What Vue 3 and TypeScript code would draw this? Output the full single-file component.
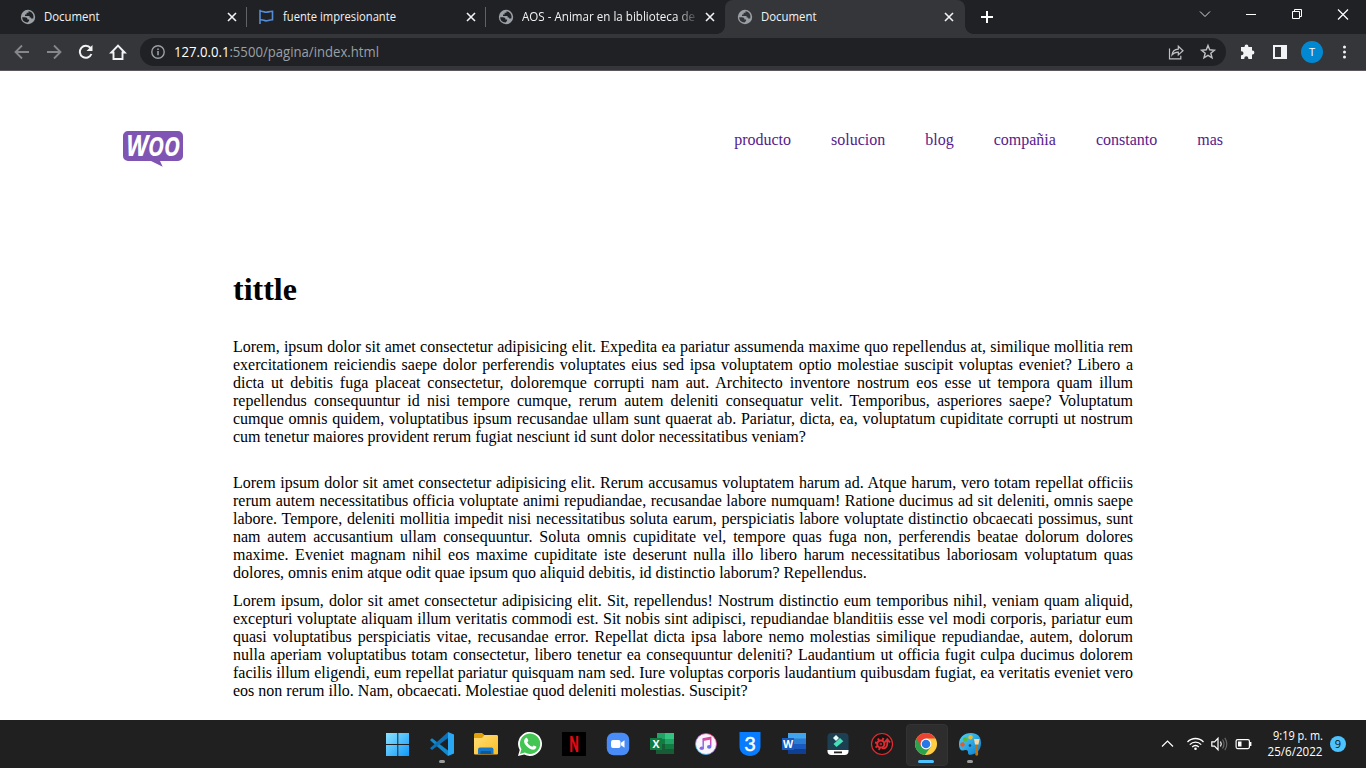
<script setup lang="ts">
interface Tab { title: string; icon: 'globe' | 'flag'; active?: boolean; w: number }

const tabs: Tab[] = [
  { title: 'Document', icon: 'globe', w: 55.5 },
  { title: 'fuente impresionante', icon: 'flag', w: 113 },
  { title: 'AOS - Animar en la biblioteca de', icon: 'globe', w: 173 },
  { title: 'Document', icon: 'globe', active: true, w: 55.5 },
]

const links: string[] = ['producto', 'solucion', 'blog', 'compañia', 'constanto', 'mas']

const paragraphs: string[][] = [
  [
    'Lorem, ipsum dolor sit amet consectetur adipisicing elit. Expedita ea pariatur assumenda maxime quo repellendus at, similique mollitia rem',
    'exercitationem reiciendis saepe dolor perferendis voluptates eius sed ipsa voluptatem optio molestiae suscipit voluptas eveniet? Libero a',
    'dicta ut debitis fuga placeat consectetur, doloremque corrupti nam aut. Architecto inventore nostrum eos esse ut tempora quam illum',
    'repellendus consequuntur id nisi tempore cumque, rerum autem deleniti consequatur velit. Temporibus, asperiores saepe? Voluptatum',
    'cumque omnis quidem, voluptatibus ipsum recusandae ullam sunt quaerat ab. Pariatur, dicta, ea, voluptatum cupiditate corrupti ut nostrum',
    'cum tenetur maiores provident rerum fugiat nesciunt id sunt dolor necessitatibus veniam?',
  ],
  [
    'Lorem ipsum dolor sit amet consectetur adipisicing elit. Rerum accusamus voluptatem harum ad. Atque harum, vero totam repellat officiis',
    'rerum autem necessitatibus officia voluptate animi repudiandae, recusandae labore numquam! Ratione ducimus ad sit deleniti, omnis saepe',
    'labore. Tempore, deleniti mollitia impedit nisi necessitatibus soluta earum, perspiciatis labore voluptate distinctio obcaecati possimus, sunt',
    'nam autem accusantium ullam consequuntur. Soluta omnis cupiditate vel, tempore quas fuga non, perferendis beatae dolorum dolores',
    'maxime. Eveniet magnam nihil eos maxime cupiditate iste deserunt nulla illo libero harum necessitatibus laboriosam voluptatum quas',
    'dolores, omnis enim atque odit quae ipsum quo aliquid debitis, id distinctio laborum? Repellendus.',
  ],
  [
    'Lorem ipsum, dolor sit amet consectetur adipisicing elit. Sit, repellendus! Nostrum distinctio eum temporibus nihil, veniam quam aliquid,',
    'excepturi voluptate aliquam illum veritatis commodi est. Sit nobis sint adipisci, repudiandae blanditiis esse vel modi corporis, pariatur eum',
    'quasi voluptatibus perspiciatis vitae, recusandae error. Repellat dicta ipsa labore nemo molestias similique repudiandae, autem, dolorum',
    'nulla aperiam voluptatibus totam consectetur, libero tenetur ea consequuntur deleniti? Laudantium ut officia fugit culpa ducimus dolorem',
    'facilis illum eligendi, eum repellat pariatur quisquam nam sed. Iure voluptas corporis laudantium quibusdam fugiat, ea veritatis eveniet vero',
    'eos non rerum illo. Nam, obcaecati. Molestiae quod deleniti molestias. Suscipit?',
  ],
]
</script>

<template>
  <div class="screen">
    <header class="strip">
      <div v-for="(tab, i) in tabs" :key="i" class="tab" :class="{ active: tab.active, ruled: i < 2 }">
        <svg v-if="tab.icon === 'globe'" class="fav" viewBox="0 0 16 16">
          <circle cx="8" cy="8" r="7.2" fill="#9aa0a6" />
          <path d="M2.200 8.300h2.700c1.600 0 2.600.8 2.600 2.200h1.600v1.200l-1.500 1.800c-3.200.1-5.400-2.200-5.400-5.200z" :fill="tab.active ? '#35363a' : '#202124'" />
          <path d="M8.500 2.300v1.500H6.600v1.700H5v1.400h4.600v1.500h1.500v1.200h2.100c1.200-3.500-1.100-6.800-4.700-7.300z" :fill="tab.active ? '#35363a' : '#202124'" />
        </svg>
        <svg v-else class="fav" viewBox="0 0 16 16" fill="none" stroke="#538dd7" stroke-width="1.6">
          <path d="M1 .8V15M1 2.200h1.500c2 0 2.500 1.100 4.500 1.100s3-1.100 6.500-1.100v8.600c-3.500 0-4.500 1.100-6.500 1.100s-3-1.600-6-1.100" />
        </svg>
        <div class="tab-title" :class="{ fade: i === 2 }">
          <svg width="176" height="18"><text x="0" y="13" :textLength="tab.w" lengthAdjust="spacingAndGlyphs">{{ tab.title }}</text></svg>
        </div>
        <svg class="close" viewBox="0 0 10 10" stroke="#f1f3f4" stroke-width="1.6"><path d="M1 1l8 8M9 1L1 9" /></svg>
      </div>
      <svg class="plus" viewBox="0 0 12 12" stroke="#fff" stroke-width="2"><path d="M6 0v12M0 6h12" /></svg>
      <div class="window-buttons">
        <svg width="162" height="28" fill="none" stroke="#fff">
          <path d="M8 11.500l5 5 5-5" stroke="#d8d9da" />
          <path d="M54 14.500h10" />
          <path d="M100.500 11.500h7v7h-7zM102.500 11.500v-2h7v7h-2" />
          <path d="M146 9.500l10 10M156 9.500l-10 10" stroke-width="1.200" />
        </svg>
      </div>
    </header>

    <div class="toolbar">
      <svg class="nav-icons" width="140" height="36" fill="none" stroke-width="1.800">
        <path d="M29 18H16M22 11.500L15.500 18l6.500 6.500" stroke="#85878a" />
        <path d="M47 18h13M54 11.500l6.500 6.500-6.500 6.500" stroke="#85878a" />
        <path d="M90.500 14a6 6 0 1 0 .9 6" stroke="#f1f3f4" stroke-width="2" />
        <path d="M92.500 11v6h-6z" fill="#f1f3f4" />
        <path d="M113.500 25v-6.500h-2.200l6.700-6.800 6.700 6.800h-2.200V25z" stroke="#f1f3f4" stroke-width="1.900" />
      </svg>
      <div class="omnibox">
        <svg class="info" viewBox="0 0 14 14" fill="none" stroke="#9aa0a6" stroke-width="1.400"><circle cx="7" cy="7" r="6.200" /><path d="M7 6v4.300M7 3.500v1.400" stroke-width="1.600" /></svg>
        <svg class="url" width="240" height="20"><text x="0" y="15" textLength="205" lengthAdjust="spacingAndGlyphs"><tspan fill="#fff">127.0.0.1</tspan><tspan>:5500/pagina/index.html</tspan></text></svg>
        <svg class="box-actions" width="50" height="20" fill="none" stroke="#bfc1c4" stroke-width="1.200">
          <path d="M2.500 6.500v10.300h11.300v-3M5 13c.4-3.700 2.700-5.700 6.300-5.900V4.200l4.700 4.500-4.700 4.300v-2.800c-2.800 0-4.800.9-6.300 2.800z" />
          <path d="M41 3.500l1.700 4.300 4.700.4-3.600 3.100 1.200 4.500-4-2.500-4 2.500 1.200-4.500-3.600-3.100 4.700-.4z" stroke-width="1.400" />
        </svg>
      </div>
      <svg class="tools" width="140" height="36">
        <path d="M15 13h3.600v-.5a1.900 1.900 0 0 1 3.800 0v.5H26v3.600h.5a1.900 1.900 0 0 1 0 3.800H26V25h-3.700v-.7a2 2 0 0 0-4 0v.7H15v-3.700h.5a2 2 0 0 0 0-4H15z" fill="#f1f3f4" />
        <path d="M48 12h12v12H48z" fill="none" stroke="#f1f3f4" stroke-width="2" />
        <path d="M55 11h6v14h-6z" fill="#f1f3f4" />
        <circle cx="86" cy="18" r="11" fill="#0288d1" />
        <text x="86" y="22" text-anchor="middle" fill="#fff" font-size="11">T</text>
        <g fill="#f1f3f4"><circle cx="118.500" cy="13" r="1.500" /><circle cx="118.500" cy="18" r="1.500" /><circle cx="118.500" cy="23" r="1.500" /></g>
      </svg>
    </div>

    <main class="page">
      <div class="masthead">
        <svg class="logo" viewBox="0 0 60 36">
          <path d="M5 0h50a5 5 0 0 1 5 5v20a5 5 0 0 1-5 5H37l2.700 5.800L28 30H5a5 5 0 0 1-5-5V5a5 5 0 0 1 5-5z" fill="#7f54b3" />
          <text x="3" y="25" textLength="54" lengthAdjust="spacingAndGlyphs"><tspan class="big">W</tspan><tspan class="small">OO</tspan></text>
        </svg>
        <nav><a v-for="link in links" :key="link">{{ link }}</a></nav>
      </div>
      <article>
        <h1>tittle</h1>
        <p v-for="(lines, i) in paragraphs" :key="i"><span v-for="line in lines" :key="line">{{ line }}</span></p>
      </article>
    </main>

    <footer class="taskbar">
      <div class="apps">
        <div class="app">
          <svg viewBox="0 0 24 24"><defs><linearGradient id="win" x2="1" y2="1"><stop stop-color="#8be4ff" /><stop offset="1" stop-color="#1198fa" /></linearGradient></defs><path d="M0 1h11.300v11H0zM12.300 1H23v11H12.300zM0 13h11.300v11H0zM12.300 13H23v11H12.300z" fill="url(#win)" /></svg>
        </div>
        <div class="app running">
          <svg viewBox="0 0 24 24"><path d="M0 8l2-1.800L18 18.500V24L1.500 9.500z" fill="#1589cc" /><path d="M18 0v6L2 18l-2-1.700L1.400 15z" fill="#0b72b8" /><path d="M18 0l6 2.600v18.800L18 24z" fill="#2aa7f2" /></svg>
        </div>
        <div class="app">
          <svg viewBox="0 0 24 24"><defs><linearGradient id="folder" x2="1" y2="1"><stop stop-color="#ffdf78" /><stop offset="1" stop-color="#fbbd22" /></linearGradient></defs><path d="M0 2.500Q0 1 1.500 1H8l2.500 2H22.500Q24 3 24 4.500V10H0z" fill="#e0a00c" /><path d="M0 6h8l2.500-3h12Q24 3 24 4.500v17q0 1-1 1H1q-1 0-1-1z" fill="url(#folder)" /><path d="M4 22v-4.500q0-2 2-2h11.500q2 0 2 2V22z" fill="#1778c9" /><path d="M6.500 22v-2q0-1 1-1h8.500q1 0 1 1v2z" fill="#0b59a0" /></svg>
        </div>
        <div class="app">
          <svg viewBox="0 0 24 24"><path d="M0 24l1.700-6A12 12 0 1 1 6.200 22.400z" fill="#fff" /><path d="M2 22l1.400-4.800a10.200 10.200 0 1 1 3.500 3.400z" fill="#43c553" /><path d="M7.500 6.200c1-.8 1.600-.5 2 .5l.8 1.900c.2.700-1 1.500-1 1.900 1 2.100 2.600 3.500 4.800 4.200.4 0 1.200-1.400 1.600-1.300l2.500 1.200c.5.600-.4 2.500-1.700 2.900-2.300.7-5.900-1.200-7.800-3.300-2.100-2.200-4-5.600-1.200-8z" fill="#fff" /></svg>
        </div>
        <div class="app">
          <svg viewBox="0 0 24 24"><path d="M0 0h24v24H0z" fill="#000" /><text class="netflix" x="7.200" y="20" textLength="9.600" lengthAdjust="spacingAndGlyphs">N</text></svg>
        </div>
        <div class="app">
          <svg viewBox="0 0 24 24"><rect x=".8" y=".8" width="22.400" height="22.400" rx="7" fill="#4a8cf7" /><rect x="5" y="8" width="9.500" height="8" rx="2" fill="#fff" /><path d="M15 10.700l3.500-2.500v7.600L15 13.300z" fill="#fff" /></svg>
        </div>
        <div class="app">
          <svg viewBox="0 0 24 24"><path d="M7 1h9v6H7z" fill="#21a366" /><path d="M15 1h9v6h-9z" fill="#33c481" /><path d="M6 7h9v5H6z" fill="#107c41" /><path d="M15 7h9v5h-9z" fill="#21a366" /><path d="M6 12h9v5H6z" fill="#185c37" /><path d="M15 12h9v5h-9z" fill="#107c41" /><path d="M6 17h18v5H6z" fill="#185c37" /><path d="M0 6h12v12H0z" fill="#107c41" /><text class="office" x="6" y="15.800">X</text></svg>
        </div>
        <div class="app">
          <svg viewBox="0 0 24 24"><defs><linearGradient id="tune" gradientUnits="userSpaceOnUse" x1="18" y1="3" x2="6" y2="20"><stop stop-color="#fb3d72" /><stop offset=".5" stop-color="#ad55e2" /><stop offset="1" stop-color="#33bdf2" /></linearGradient></defs><circle cx="12" cy="12" r="10.500" fill="#f8f5fb" stroke="url(#tune)" stroke-width=".8" /><path d="M9.200 16V6.800l7.500-1.500v9.300" fill="none" stroke="url(#tune)" stroke-width="1.500" /><path d="M9 8l8-1.600" stroke="#d94a9a" stroke-width="2.200" /><ellipse cx="7.800" cy="16.300" rx="2.200" ry="1.800" fill="#8e66e8" /><ellipse cx="15.200" cy="14.900" rx="2.200" ry="1.800" fill="#6c70ed" /></svg>
        </div>
        <div class="app">
          <svg viewBox="0 0 24 24"><path d="M1.500 0h21v14.500c0 4.500-3 7.500-6 8.500-3 1.300-6 1.300-9 0-3-1-6-4-6-8.500z" fill="#087cff" /><text class="three" x="12" y="19">3</text></svg>
        </div>
        <div class="app">
          <svg viewBox="0 0 24 24"><path d="M6 1h18v6H6z" fill="#41a5ee" /><path d="M6 6.500h18v5.500H6z" fill="#2b7cd3" /><path d="M6 12h18v5H6z" fill="#185abd" /><path d="M6 17h18v5H6z" fill="#103f91" /><path d="M0 6h12v12H0z" fill="#185abd" /><text class="office" x="6" y="15.800">W</text></svg>
        </div>
        <div class="app">
          <svg viewBox="0 0 24 24"><rect x="1.500" y="1" width="21" height="22" rx="4" fill="#1c4052" /><path d="M1.500 18h21v1a4 4 0 0 1-4 4h-13a4 4 0 0 1-4-4z" fill="#fff" /><path d="M10 3l3 3-3 3-3-3z" fill="#e4fff9" /><path d="M14 6l3.300 3.300-6.800 5.700L7.500 12z" fill="#46dfb8" /><path d="M8 19.500h8v1.800H8z" fill="#222" /></svg>
        </div>
        <div class="app">
          <svg viewBox="0 0 24 24" fill="none" stroke="#e32b31"><circle cx="12" cy="12" r="10.500" fill="#181414" stroke-width="1.200" /><circle cx="10.800" cy="12" r="3.600" stroke-width="2" /><circle cx="10.800" cy="12" r=".8" /><path d="M8 6.500l1 2M13.500 6l-1 2M5 10.500l2.500.5M5.500 15.500l2.200-1.500M9 18l.7-2" stroke-width="2" /><path d="M12 16.200c3 .8 5.300-1 5.300-4.500V8M14.500 10.500l2.800-3.300 2.700 3.300" stroke-width="1.800" /></svg>
        </div>
        <div class="app current">
          <svg viewBox="0 0 24 24"><circle cx="12" cy="12" r="11" fill="#ffcd40" /><path d="M12 12L2.500 6.500a11 11 0 0 0 8.300 16.400L16.800 14.700z" fill="#2ba24c" /><path d="M2.500 6.500a11 11 0 0 1 19 0H12L7.200 14.800z" fill="#ea4335" /><circle cx="12" cy="12" r="5.400" fill="#fff" /><circle cx="12" cy="12" r="4.300" fill="#2878e7" /></svg>
        </div>
        <div class="app running">
          <svg viewBox="0 0 24 24"><defs><linearGradient id="paint" x2="1" y2="1"><stop stop-color="#50d4f4" /><stop offset="1" stop-color="#087bd4" /></linearGradient></defs><path d="M13 1C6 1 1 5.500 1 12c0 5 2 7 4.500 6.500 3-.8 4.500-.5 4.500 2 0 2 .8 2.500 3 2.300C19 22 23 17.500 23 11S19.500 1 13 1z" fill="url(#paint)" /><circle cx="12.500" cy="5.200" r="2.200" fill="#fbb813" /><circle cx="7" cy="7.500" r="2.200" fill="#5cb931" /><circle cx="4.500" cy="12.500" r="2.200" fill="#e45a2a" /><circle cx="12" cy="13.500" r="1.300" fill="#17456d" /><path d="M17.300 12h2.800v11q-1.400 1.500-2.800 0z" fill="#b97118" /><path d="M16 7h5.500l-1 5.500H17z" fill="#f5d9a3" /></svg>
        </div>
      </div>
      <svg class="tray" width="100" height="48" fill="none" stroke="#fff" stroke-width="1.200">
        <path d="M5 26.500l5.500-5.500L16 26.500" />
        <path d="M30.500 22c4.500-4.700 11.500-4.700 16 0M32.800 24.600c3.200-3.400 8.200-3.400 11.400 0M35.200 27c1.900-2 4.700-2 6.600 0" stroke-width="1.300" /><circle cx="38.500" cy="28.700" r="1.300" fill="#fff" stroke="none" />
        <path d="M54.800 21.800h2.700l3.500-3.500v11.400l-3.500-3.500h-2.700z" /><path d="M63.500 21.500q1.500 2.500 0 5" /><path d="M65.500 19.500q3 4.500 0 9M67.800 17.800q4 6.200 0 12.400" stroke="#666" />
        <rect x="79.100" y="19.600" width="13.300" height="9" rx="1.500" /><path d="M81 21.500h3.500v5H81z" fill="#fff" stroke="none" /><path d="M93.500 22v4" stroke-width="1.800" />
      </svg>
      <svg class="clock" width="60" height="36"><text x="15" y="13.500" textLength="50" lengthAdjust="spacingAndGlyphs">9:19 p. m.</text><text x="9.500" y="29.500" textLength="55" lengthAdjust="spacingAndGlyphs">25/6/2022</text></svg>
      <span class="count">9</span>
    </footer>
  </div>
</template>

<style>
html, body { margin: 0; overflow: hidden; }
</style>

<style scoped>
* { box-sizing: border-box; }
.screen { width: 1366px; height: 768px; display: flex; flex-direction: column; overflow: hidden; background: #fff; font-family: "Open Sans", "Noto Sans", sans-serif; }
svg { display: block; flex: none; overflow: visible; }
.strip { height: 34px; flex: none; display: flex; align-items: center; background: #202124; padding-left: 8px; }
.tab { position: relative; width: 239px; height: 34px; display: flex; align-items: center; padding-left: 12px; color: #f1f3f4; }
.tab.ruled { background: linear-gradient(#5f6368, #5f6368) right 0 top 7px / 1px 20px no-repeat; }
.tab.active { width: 240px; background: #35363a; border-radius: 8px 8px 0 0; }
.tab.active::before, .tab.active::after { content: ""; position: absolute; bottom: 0; width: 8px; height: 8px; }
.tab.active::before { left: -8px; background: radial-gradient(circle at 0 0, transparent 7.5px, #35363a 8px); }
.tab.active::after { right: -8px; background: radial-gradient(circle at 100% 0, transparent 7.5px, #35363a 8px); }
.fav { width: 16px; height: 16px; }
.tab-title { width: 176px; height: 18px; margin-left: 8px; }
.tab-title.fade { -webkit-mask-image: linear-gradient(90deg, #000 154px, transparent 177px); mask-image: linear-gradient(90deg, #000 154px, transparent 177px); }
.tab text { font-size: 12px; fill: #f1f3f4; }
.close { width: 10px; height: 10px; margin-left: 7px; }
.plus { width: 12px; height: 12px; margin-left: 16px; }
.window-buttons { height: 34px; margin-left: auto; padding-right: 12px; }
.toolbar { height: 37px; flex: none; display: flex; background: #35363a; border-bottom: 1px solid #5b575c; }
.omnibox { width: 1086px; height: 28px; margin-top: 4px; border-radius: 14px; background: #202124; display: flex; align-items: center; padding-left: 11px; }
.info { width: 14px; height: 14px; }
.url { margin-left: 9px; font-size: 14px; fill: #9aa0a6; }
.box-actions { margin-left: auto; margin-right: 9px; }
.page { height: 649px; flex: none; font-family: "Liberation Serif", "Times New Roman", serif; font-size: 16px; line-height: 18px; color: #000; overflow: hidden; }
.masthead { width: 1100px; margin: 60px 0 0 123px; display: flex; justify-content: space-between; }
.logo { width: 60px; height: 36px; }
.logo text { font-family: "Open Sans", sans-serif; font-weight: 700; font-style: italic; fill: #fff; }
.logo .big { font-size: 29px; }
.logo .small { font-size: 26px; }
nav { display: flex; gap: 40px; color: #551a8b; }
article { width: 900px; margin: 104px 0 0 233px; }
h1 { font-size: 32px; line-height: 37px; margin: 0 0 30px; }
p { margin: 0 0 10px; }
p:first-of-type { margin-bottom: 28px; }
p span { display: block; white-space: nowrap; text-align: justify; text-align-last: justify; }
p span:last-child { text-align-last: left; }
.taskbar { height: 48px; flex: none; background: #202020; display: flex; align-items: center; padding-left: 376px; }
.apps { display: flex; }
.app { position: relative; width: 44px; height: 48px; display: flex; align-items: center; justify-content: center; }
.app svg { position: relative; width: 24px; height: 24px; }
.app.current::before { content: ""; position: absolute; left: 2px; top: 4px; width: 40px; height: 40px; border: 1px solid #333; border-radius: 4px; background: #2d2d2d; }
.running::after, .current::after { content: ""; position: absolute; bottom: 5px; width: 6px; height: 3px; border-radius: 2px; background: #9a9a9a; }
.current::after { width: 16px; background: #4cc2ff; }
.netflix { font: 700 22px Roboto, sans-serif; fill: #e50914; }
.office { font-family: "Open Sans", sans-serif; font-size: 10.5px; font-weight: 700; fill: #fff; text-anchor: middle; }
.three { font-family: Lato, sans-serif; font-size: 20px; font-weight: 400; fill: #fff; stroke: #fff; stroke-width: .5px; text-anchor: middle; }
.tray { margin-left: 165px; }
.clock { margin-left: 1px; font-size: 12px; fill: #fff; }
.count { width: 16px; height: 16px; margin-left: 12px; border-radius: 50%; background: #4cc2ff; color: #111; font-size: 11px; line-height: 16px; text-align: center; }
</style>
